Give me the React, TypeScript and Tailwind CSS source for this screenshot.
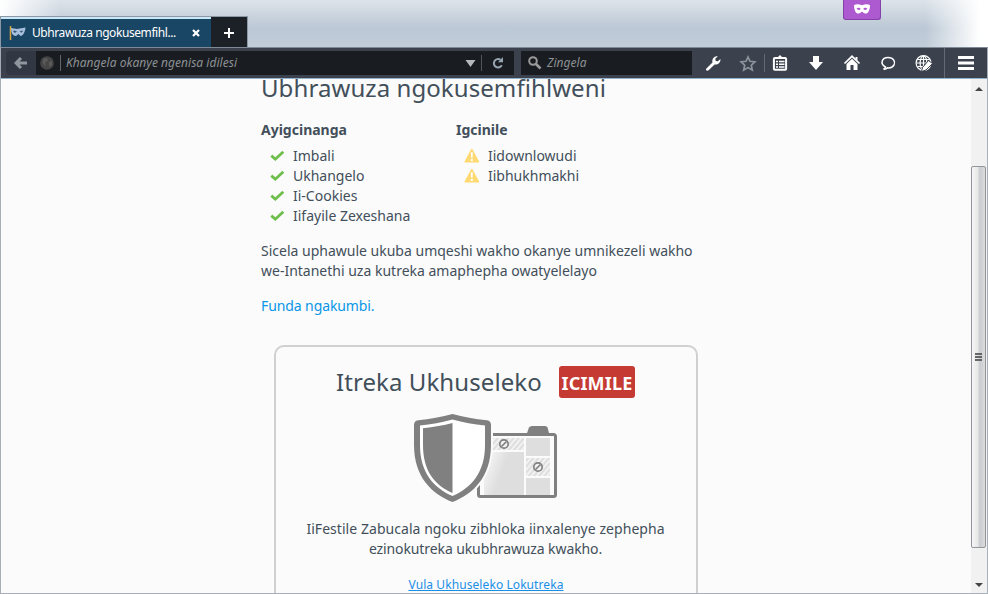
import type { ReactNode } from "react";

const kept = ["Iidownlowudi", "Iibhukhmakhi"];
const cleared = ["Imbali", "Ukhangelo", "Ii-Cookies", "Iifayile Zexeshana"];

function Mask({ className, fill }: { className: string; fill: string }) {
  return (
    <svg viewBox="0 0 16 10" className={className}>
      <path
        fillRule="evenodd"
        fill={fill}
        d="M0 1.2C1.5.2 4.500 0 8 1.200C11.500 0 14.500.2 16 1.200C15.900 5.500 14.600 9.600 11.400 9.600C9.700 9.600 9 7.700 8 7.700S6.300 9.600 4.600 9.600C1.400 9.600.1 5.500 0 1.200ZM2.600 4.600C3.400 6.400 5.800 6.400 6.800 5C5.800 3.300 3.700 3.200 2.600 4.600ZM13.400 4.600C12.300 3.200 10.200 3.300 9.200 5C10.200 6.400 12.600 6.400 13.400 4.600Z"
      />
    </svg>
  );
}

function Check() {
  return (
    <svg viewBox="0 0 14 11" className="ml-[9px] mr-[9px] h-[11px] w-[14px]">
      <path d="M1.300 4.600L5.300 8.200L13.300 .8" fill="none" stroke="#6dbf4a" strokeWidth="2.800" />
    </svg>
  );
}

function Warning() {
  return (
    <svg viewBox="0 0 16 16" className="ml-[8px] mr-[8px] h-4 w-4">
      <path d="M7.800 1.700L14.400 13.800H1.200Z" fill="#ffd971" stroke="#ffd971" strokeWidth="1.600" strokeLinejoin="round" />
      <path d="M6.800 4.300H8.800L8.500 9.700H7.100ZM6.800 11H8.800V12.900H6.800Z" fill="#fff" />
    </svg>
  );
}

function List({ items, icon }: { items: string[]; icon: ReactNode }) {
  return (
    <ul>
      {items.map((item) => (
        <li key={item} className="flex h-5 items-center whitespace-nowrap text-[14px] leading-5">
          {icon}
          {item}
        </li>
      ))}
    </ul>
  );
}

function Shield() {
  return (
    <svg viewBox="0 0 146 90" className="h-[90px] w-[146px]">
      <defs>
        <pattern id="stripes" width="4" height="4" patternUnits="userSpaceOnUse" patternTransform="rotate(40)">
          <rect width="4" height="4" fill="#f2f2f2" />
          <rect width="2" height="4" fill="#dedede" />
        </pattern>
        <linearGradient id="glow" x1="0" x2="1" y1="0" y2="0.400">
          <stop offset="0" stopColor="#fbfbfb" />
          <stop offset="0.550" stopColor="#dedede" />
        </linearGradient>
      </defs>
      <path d="M113 21L115 15.500Q116 14 118 14H131Q133 14 133.500 15.500L135 21Z" fill="#808080" />
      <rect x="64.500" y="22.500" width="77" height="62" rx="2" fill="#fbfbfb" stroke="#808080" strokeWidth="3" />
      <path d="M70 40H110V83H70Z" fill="url(#glow)" />
      <path d="M70 26H110V38H70ZM112 46H136V64H112Z" fill="url(#stripes)" />
      <path d="M112 26H136V44H112ZM112 66H136V83H112Z" fill="#dedede" />
      {[[90, 32], [124, 55]].map(([cx, cy]) => (
        <g key={cx} fill="none" stroke="#808080" strokeWidth="1.700">
          <circle cx={cx} cy={cy} r="4.200" fill="#f2f2f2" />
          <path d={`M${cx - 2.500} ${cy + 2.500}L${cx + 2.500} ${cy - 2.500}`} />
        </g>
      ))}
      <path d="M38.500 2C28 5 16 7 6 7.500Q0 8 0 13V33C0 65 18 82 38.500 90C59 82 77 65 77 33V13Q77 8 71 7.500C61 7 49 5 38.500 2Z" fill="#fbfbfb" stroke="#fbfbfb" strokeWidth="4" />
      <path d="M38.500 2C28 5 16 7 4 8.200Q0 9 0 13V33C0 65 18 82 38.500 90C59 82 77 65 77 33V13Q77 9 73 8.200C61 7 49 5 38.500 2Z" fill="#808080" />
      <path d="M38.500 7.500C28 10.500 17 12.500 6 13.500V33C6 61 20 76 38.500 84C57 76 71 61 71 33V13.500C60 12.500 49 10.500 38.500 7.500Z" fill="#fff" />
      <path d="M38.500 11C29 13.500 20 15 9 16.200V33C9 59 21 73.500 38.500 81Z" fill="#808080" />
    </svg>
  );
}

function ToolIcons() {
  return (
    <svg viewBox="0 0 294 30" className="h-[30px] w-[294px] shrink-0" fill="#fff">
      <path d="M14.200 20.800L20.500 14.500C19.700 10.500 22.300 7.900 25.800 8.200L23.300 10.800L23.700 13L25.900 13.300L28.400 10.900C28.800 14.300 26.200 16.900 22.600 16.600L16.600 22.300C15 23.200 13.300 22.200 14.200 20.800Z" />
      <path d="M56 9L58 13.300L62.900 13.900L59.300 17.200L60.300 22L56 19.600L51.700 22L52.700 17.200L49.100 13.900L54 13.300Z" fill="none" stroke="#8e949c" strokeWidth="1.700" />
      <path d="M72.500 6V24M252.500 0V30" stroke="#646b75" />
      <rect x="81.900" y="10" width="12.200" height="11.700" rx="1" fill="none" stroke="#fff" strokeWidth="2" />
      <path d="M83.500 9L86 9L88 7L90 9H92.500V11H83.500ZM84 12.800H86V14.300H84ZM87 12.800H92.500V14.300H87ZM84 15.500H86V17H84ZM87 15.500H92.500V17H87ZM84 18.200H86V19.700H84ZM87 18.200H92.500V19.700H87Z" />
      <path d="M121 8H127V14H131L124 22L117 14H121Z" />
      <path d="M152.500 15.500L160 8.300L167.500 15.500" fill="none" stroke="#fff" strokeWidth="1.700" />
      <path d="M154.500 16L160 10.800L165.500 16V22H161.500V17H158.500V22H154.500ZM163.500 9H165.500V12.500L163.500 11Z" />
      <path d="M191.500 21C192.500 20.800 193.500 19.500 193.500 19C187.500 15.800 190 9.500 196 9.500S203.500 14 202 17C200 20 196.800 20 195.500 19.800C194.300 21 192.800 21.300 191.500 21Z" fill="none" stroke="#fff" strokeWidth="1.500" />
      <g fill="none" stroke="#fff" strokeWidth="1.200">
        <circle cx="231.500" cy="15" r="7.400" />
        <ellipse cx="231.500" cy="15" rx="3.400" ry="7" />
        <path d="M231.500 8V22M224.500 15H238.500M225.500 11.500H237.500M225.500 18.500H235.500" />
      </g>
      <path d="M229.500 23.500L230.500 19.500L236.500 12.500L240.500 15.500L234 22Z" stroke="#3b424e" />
      <path d="M266 8H282V11H266ZM266 13.500H282V16.500H266ZM266 19H282V22H266Z" />
    </svg>
  );
}

export default function App() {
  return (
    <div className="relative flex h-[594px] w-[988px] flex-col overflow-hidden bg-white font-['Noto_Sans','Open_Sans',sans-serif] text-[#424f5a]">
      <header className="flex h-[47px] shrink-0 items-end bg-[linear-gradient(90deg,#fff_0,#fff0_60px,#fff0_925px,#fff_980px),linear-gradient(#dde3ea,#bbc8d5_28px,#c1cdd9)]">
        <div className="flex h-[31px] w-[248px] border border-b-0 border-[#8d98a5]">
          <div className="flex w-[210px] items-center border-t-2 border-[#c8e8fa] bg-[#1a4666] pl-[8px] text-[12px] text-white">
            <svg viewBox="0 0 17 14" className="mr-[6px] h-[14px] w-[17px] shrink-0">
              <path d="M1.500 0V14" stroke="#d7a63c" strokeWidth="1.500" />
              <path d="M2 2L8 3L16.500 1.500C16 6 14 10 11.500 10L9.500 8L7 10C4 10 2 7 2 2Z" fill="#a9c0dd" />
              <path d="M4 5L5.500 4.500L8 5.500L6.500 6.800L5 6.500ZM10.500 5.500L13.500 4.500L14 5L12.500 6.800Z" fill="#31577a" />
            </svg>
            <span className="whitespace-nowrap tracking-[-0.42px]">Ubhrawuza ngokusemfihl...</span>
            <svg viewBox="0 0 8 8" className="ml-auto mr-[11px] h-2 w-2 shrink-0"><path d="M1 1L7 7M7 1L1 7" stroke="#fff" strokeWidth="2.200" /></svg>
          </div>
          <div className="flex flex-1 items-center justify-center bg-[#1b2126]">
            <svg viewBox="0 0 10 10" className="mt-px h-[10px] w-[10px]"><path d="M5 0V10M0 5H10" stroke="#fff" strokeWidth="2" /></svg>
          </div>
        </div>
      </header>
      <div className="absolute left-[843px] top-0 flex h-5 w-[38px] justify-center rounded-b-[3px] border border-t-0 border-[#8342a5] bg-[#ad59cf] pt-[4px]">
        <Mask fill="#fff" className="h-[10px] w-4" />
      </div>
      <nav className="flex h-8 shrink-0 items-center border-x border-b border-t border-x-[#a4acb7] border-b-[#94b1ca] border-t-[#7f8a96] bg-[#3b424e] pl-[5px]">
        <div className="flex h-6 w-[30px] shrink-0 items-center justify-center rounded-l-sm bg-[#323843]">
          <svg viewBox="0 0 14 12" className="h-3 w-[14px]"><path d="M7 1L2 6L7 11M2.500 6H13" fill="none" stroke="#90969e" strokeWidth="3" /></svg>
        </div>
        <div className="flex h-6 w-[478px] shrink-0 items-center bg-[#191c20] pl-[4px] text-[12px] italic text-[#8d9195]">
          <svg viewBox="0 0 14 14" className="h-[14px] w-[14px]"><circle cx="7" cy="7" r="6.800" fill="#464646" /><path d="M3 3L7 2L8 4L5 7L6 10L3 8ZM9 6L12 5L12 9L9 11Z" fill="#5a5a5a" /></svg>
          <span className="ml-[6px] mr-[5px] h-4 w-px bg-[#62666b]" />
          <span className="tracking-[0.03px]">Khangela okanye ngenisa idilesi</span>
          <svg viewBox="0 0 10 7" className="ml-auto h-[7px] w-[11px]"><path d="M0 0H10L5 7Z" fill="#b5b8bc" /></svg>
          <span className="ml-[5px] h-4 w-px bg-[#50565e]" />
          <svg viewBox="0 0 12 12" className="ml-[10px] mr-[10px] h-3 w-3"><path d="M8.500 2.800A4.200 4.200 0 1 0 9.800 8.200" fill="none" stroke="#97a6b2" strokeWidth="2" /><path d="M6 5.300H11V0Z" fill="#97a6b2" /></svg>
        </div>
        <div className="ml-[7px] flex h-6 w-[171px] shrink-0 items-center bg-[#191c20] pl-[7px] text-[12px] italic text-[#8d9195]">
          <svg viewBox="0 0 14 14" className="mr-[5px] h-[14px] w-[14px]"><circle cx="5" cy="5" r="3.800" fill="none" stroke="#9a9a9a" strokeWidth="2" /><path d="M8 8L12.500 12.500" stroke="#9a9a9a" strokeWidth="2.600" /></svg>
          <span className="tracking-[0.03px]">Zingela</span>
        </div>
        <ToolIcons />
      </nav>
      <div className="flex min-h-0 flex-1 border-x border-b border-[#a9afb8] bg-[#fbfbfb]">
        <main className="h-[514px] min-w-0 flex-1 overflow-hidden pl-[260px]">
          <h1 className="mt-[-7px] h-[32px] whitespace-nowrap text-[24px] font-normal leading-8 tracking-[0.08px]">Ubhrawuza ngokusemfihlweni</h1>
          <div className="mt-[16px] flex h-[106px]">
            <section className="w-[195px]">
              <h2 className="mb-[6px] text-[14px] font-bold leading-5">Ayigcinanga</h2>
              <List items={cleared} icon={<Check />} />
            </section>
            <section>
              <h2 className="mb-[6px] text-[14px] font-bold leading-5">Igcinile</h2>
              <List items={kept} icon={<Warning />} />
            </section>
          </div>
          <p className="mt-[15px] whitespace-nowrap text-[14px] leading-5">
            Sicela uphawule ukuba umqeshi wakho okanye umnikezeli wakho<br />we-Intanethi uza kutreka amaphepha owatyelelayo
          </p>
          <p className="mt-[15px] text-[14px] leading-5 tracking-[-0.1px] text-[#0996e8]"><a>Funda ngakumbi.</a></p>
          <section className="ml-[13px] mt-[29px] flex h-[280px] w-[424px] flex-col items-center rounded-[10px] border-2 border-[#d0d0d0] pt-[19px]">
            <div className="flex h-8 w-[300px] items-center">
              <h2 className="w-[223px] whitespace-nowrap text-[24px] font-normal leading-8 tracking-[0.08px]">Itreka Ukhuseleko</h2>
              <span className="flex h-8 w-[76px] items-center justify-center rounded-[3px] bg-[#c53a33] pt-[3px] text-[18px] font-bold tracking-[0.2px] text-white">ICIMILE</span>
            </div>
            <div className="ml-[2px] mt-[14px]"><Shield /></div>
            <p className="mt-[17px] whitespace-nowrap pr-px text-center text-[14px] leading-5 tracking-[0.05px]">
              IiFestile Zabucala ngoku zibhloka iinxalenye zephepha<br /><span className="tracking-[-0.1px]">ezinokutreka ukubhrawuza kwakho.</span>
            </p>
            <a className="mt-[16px] whitespace-nowrap text-[12px] leading-5 tracking-[0.08px] text-[#1a8fe6] underline">Vula Ukhuseleko Lokutreka</a>
          </section>
        </main>
        <aside className="flex w-[16px] flex-col items-start bg-[#f1f1f1]">
          <div className="flex h-[87px] w-full justify-center pt-[8px]"><svg viewBox="0 0 8 4" className="h-1 w-2"><path d="M4 0L8 4H0Z" fill="#444" /></svg></div>
          <div className="flex h-[382px] w-[15px] flex-col items-center justify-center gap-px rounded-[2px] border border-[#92959a] bg-[linear-gradient(90deg,#f6f6f6,#e7e7e7_45%,#c9cbcf_60%,#dcdcdc)]">
            <i className="h-[2px] w-[7px] bg-[#666]" /><i className="h-[2px] w-[7px] bg-[#666]" /><i className="h-[2px] w-[7px] bg-[#666]" />
          </div>
          <svg viewBox="0 0 8 4" className="ml-1 mt-[35px] h-1 w-2"><path d="M0 0H8L4 4Z" fill="#444" /></svg>
        </aside>
      </div>
    </div>
  );
}
